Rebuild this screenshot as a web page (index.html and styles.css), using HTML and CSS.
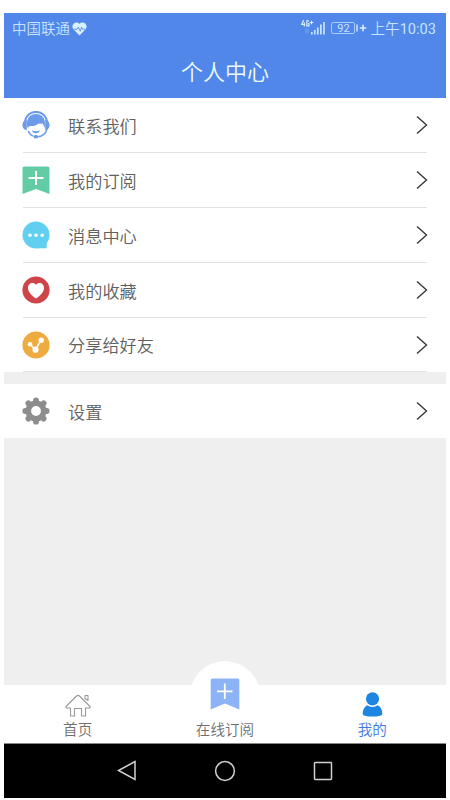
FILE: index.html
```
<!DOCTYPE html>
<html lang="zh-CN">
<head>
<meta charset="utf-8">
<title>个人中心</title>
<link rel="stylesheet" href="styles.css">
</head>
<body>
<div class="phone">
  <header class="header">
    <div class="status">
      <span class="carrier">中国联通</span>
      <svg class="health" width="15" height="14" viewBox="0 0 15 14"><path d="M7.500 13.500 1.400 7.300C-2 3 4-2 7.500 2.100 11-2 17 3 13.600 7.300Z" fill="#d9f0ff"/><path d="M2 7.200h3l1.300-2 2 4 1.300-4 1 2H13" fill="none" stroke="#5388ea" stroke-width=".9"/></svg>
      <svg class="signal" width="25" height="16" viewBox="0 0 25 16"><g fill="none" stroke="#d9f0ff" stroke-width="1.200"><path d="M2.700 0 .8 4.500h3.400M3.300 2.500v4M8 .8H5.800v5H8V3.500H7M8.800 2.500h3.400M10.500.8v3.400"/></g><path d="M5 8.500v5M7 8.500v5" stroke="#82aef5" stroke-width=".8"/><path d="M10.800 12v2.500M13.800 10v4.500M16.800 7.500v7M19.900 4.500v10M23 2v12.500" stroke="#c8e3ff" stroke-width="1.700"/></svg>
      <span class="battery">92</span>
      <svg class="charge" width="11" height="12" viewBox="0 0 11 12"><path d="M1 2.500v7" stroke="#c8e3ff" stroke-width="1.500"/><path d="M3.800 6h6.500M7 2.800v6.400" stroke="#d9f0ff" stroke-width="1.600"/></svg>
      <span class="time">上午<span class="digits">10:03</span></span>
    </div>
    <h1 class="title">个人中心</h1>
  </header>
  <main class="content">
    <ul class="list">
      <li class="row">
        <svg class="icon" viewBox="0 0 28 28"><path d="M3 10.500C5-2.300 23-2.300 25 10.500" fill="none" stroke="#6c9ce9" stroke-width="2"/><path d="M4.800 9v10C-1 19-1 9 4.800 9ZM23.200 9v10c5.800 0 5.800-10 0-10Z" fill="#6c9ce9"/><path d="M5.600 17.500C3.300 8 7.500 3 14 3s10.700 5 8.400 14.500c-.4-2.300-1-3.800-2-5.300-1 .8-2.400.8-3.900.3-2.500 2.500-5.500 2.800-8.500 2.500-1.100.5-2 1.200-2.400 2.500Z" fill="#6c9ce9"/><path d="M6.300 20c1 2.500 2.500 4.300 4.700 5M25 18c-1.200 4.800-4.500 7.500-10 7.800" fill="none" stroke="#6c9ce9" stroke-width="1.500"/><path d="M9.800 19.300c2.500 1.300 5.700 1.300 8.200 0-1 4-7.200 4-8.200 0Z" fill="#6c9ce9"/><rect x="11.500" y="23.900" width="4.500" height="3.600" rx="1.700" fill="#6c9ce9"/></svg>
        <span class="label">联系我们</span>
        <svg class="arrow" viewBox="0 0 12 20"><path d="m1 1.500 9.500 8.500L1 18.500"/></svg>
      </li>
      <li class="row">
        <svg class="icon" viewBox="0 0 28 28"><path d="M2 .5h24q1.500 0 1.500 1.500v26L14 23 .5 28V2Q.5.5 2 .5Z" fill="#62cda5"/><path d="M6.500 12h15M14 5v14" stroke="#fff" stroke-width="2"/></svg>
        <span class="label">我的订阅</span>
        <svg class="arrow" viewBox="0 0 12 20"><path d="m1 1.500 9.500 8.500L1 18.500"/></svg>
      </li>
      <li class="row">
        <svg class="icon" viewBox="0 0 28 28"><circle cx="14" cy="14" r="13.500" fill="#60cff0"/><path d="M16 27.200h8.700V22L22 19Z" fill="#60cff0"/><g fill="#fff"><circle cx="8" cy="14.200" r="1.800"/><circle cx="14" cy="14.200" r="1.800"/><circle cx="20.200" cy="14.200" r="1.800"/></g></svg>
        <span class="label">消息中心</span>
        <svg class="arrow" viewBox="0 0 12 20"><path d="m1 1.500 9.500 8.500L1 18.500"/></svg>
      </li>
      <li class="row">
        <svg class="icon" viewBox="0 0 28 28"><circle cx="14" cy="14" r="13.600" fill="#ce4549"/><path d="M14 22.500C11 20.500 6 16.500 6 12c0-5 5.500-6.500 8-3.200C16.500 5.500 22 7 22 12c0 4.500-5 8.500-8 10.500Z" fill="#fff"/></svg>
        <span class="label">我的收藏</span>
        <svg class="arrow" viewBox="0 0 12 20"><path d="m1 1.500 9.500 8.500L1 18.500"/></svg>
      </li>
      <li class="row">
        <svg class="icon" viewBox="0 0 28 28"><circle cx="14" cy="14" r="13.600" fill="#edab40"/><path d="m8 13.200 5.500 5.300L19 9.500" fill="none" stroke="#fff" stroke-width="1.500"/><g fill="#fff"><circle cx="8" cy="13.200" r="2.300"/><circle cx="13.500" cy="18.700" r="3.100"/><circle cx="19.200" cy="9.200" r="2.700"/></g></svg>
        <span class="label">分享给好友</span>
        <svg class="arrow" viewBox="0 0 12 20"><path d="m1 1.500 9.500 8.500L1 18.500"/></svg>
      </li>
    </ul>
    <ul class="list settings">
      <li class="row">
        <svg class="icon" viewBox="0 0 28 28"><path d="M14 3.300v21.400M3.300 14h21.400M6.400 6.400l15.200 15.200M21.600 6.400 6.400 21.600" fill="none" stroke="#8d8d8d" stroke-width="5.800" stroke-linecap="round"/><circle cx="14" cy="14" r="10.600" fill="#8d8d8d"/><circle cx="14" cy="14" r="4.900" fill="#fff"/></svg>
        <span class="label">设置</span>
        <svg class="arrow" viewBox="0 0 12 20"><path d="m1 1.500 9.500 8.500L1 18.500"/></svg>
      </li>
    </ul>
  </main>
  <nav class="tabs">
    <div class="tab">
      <svg class="home" width="26" height="23" viewBox="0 0 26 23"><path d="M1 12.500 11.500 2q1.500-1.200 3 0L25 12.500q.4 1.500-1 1.500h-3.500v8h-4v-7.500h-7V22h-4v-8H2q-1.400 0-1-1.500ZM20 1.500h3v5l-3-2Z" fill="none" stroke="#999" stroke-width="1.100" stroke-linejoin="round"/></svg>
      <span>首页</span>
    </div>
    <div class="tab middle">
      <svg class="mark" width="30" height="32" viewBox="0 0 30 32"><path d="M2 .5h26q1.300 0 1.300 1.500v29.500L15 25.500.7 31.500V2Q.7.500 2 .5Z" fill="#8db3f7"/><path d="M7 13.300h15.500M14.800 5.500v15.500" stroke="#fff" stroke-width="1.800"/></svg>
      <span>在线订阅</span>
    </div>
    <div class="tab active">
      <svg class="user" width="21" height="25" viewBox="0 0 21 25"><circle cx="10.500" cy="6.800" r="6.600" fill="#1c86e2"/><path d="M5.200 13.300q5.300 3.500 10.600 0C19 15 20.500 18.500 20.300 22q0 1-1.200 1.400Q10.500 25.800 2 23.400.7 23 .7 22C.5 18.500 2 15 5.200 13.300Z" fill="#1c86e2"/></svg>
      <span>我的</span>
    </div>
  </nav>
  <footer class="system">
    <svg width="22" height="22" viewBox="0 0 22 22"><path d="M19 1.500v18L2.500 10.500Z"/></svg>
    <svg width="22" height="22" viewBox="0 0 22 22"><circle cx="11" cy="11" r="9.400"/></svg>
    <svg width="22" height="22" viewBox="0 0 22 22"><rect x="2.500" y="2.500" width="17" height="17" rx=".7"/></svg>
  </footer>
</div>
</body>
</html>
```

FILE: styles.css
```
* { box-sizing: border-box; }

body {
  margin: 0;
  padding: 13px 4px 2px;
  background: #fff;
  font-family: Roboto, "Noto Sans CJK SC", sans-serif;
  font-weight: 350;
}

svg { display: block; flex-shrink: 0; }

.phone {
  display: flex;
  flex-direction: column;
  width: 442px;
  height: 785px;
  background: #efefef;
}

.header {
  height: 85px;
  background: #5087e9;
  color: #f0fbff;
}

.status {
  display: flex;
  align-items: center;
  height: 31px;
  padding: 0 10px 0 8px;
  font-size: 14.5px;
  line-height: 20px;
  color: #c8e3ff;
  white-space: nowrap;
}

.carrier { padding-top: 2px; }
.health { margin-left: 2px; }
.signal { margin: 0 0 2px auto; }

.battery {
  width: 24px;
  height: 12px;
  margin: 0 0 1px 5px;
  border: 1px solid #a9cbfc;
  border-radius: 2px;
  font-size: 11px;
  font-weight: 400;
  line-height: 11px;
  text-align: center;
}

.charge { margin: 0 0 2px 1px; }
.time { margin-left: 3px; padding-top: 1px; font-size: 14.6px; }
.digits { font-weight: 400; }

.title {
  margin: 13px 0 0;
  font-size: 22px;
  font-weight: 350;
  line-height: 32px;
  text-align: center;
}

.content { flex: 1; }

.list {
  margin: 0;
  padding: 0 19px;
  background: #fff;
  list-style: none;
}

.row {
  display: flex;
  align-items: center;
  height: 55px;
  border-bottom: 1px solid #e2e2e2;
}

.row:last-child { height: 54px; }
.settings { margin-top: 12px; }
.settings .row { border-bottom: 0; }

.icon {
  width: 28px;
  height: 28px;
  margin-left: -1px;
}

.label {
  flex: 1;
  margin-left: 18px;
  padding-top: 3px;
  font-size: 17.2px;
  line-height: 26px;
  color: #606060;
}

.arrow {
  width: 12px;
  height: 20px;
  margin-right: -1px;
  fill: none;
  stroke: #383838;
  stroke-width: 1.4;
}

.tabs {
  display: flex;
  height: 58px;
  background: #fff;
}

.tab {
  position: relative;
  display: flex;
  flex: 1;
  flex-direction: column;
  align-items: center;
  justify-content: flex-end;
  padding-bottom: 2px;
  font-size: 14.6px;
  line-height: 22px;
  color: #707070;
}

.tab span, .tab svg { position: relative; }
.home { margin-bottom: 2px; }
.mark { margin-bottom: 9px; }
.user { margin-bottom: 2px; }

.middle::before {
  content: "";
  position: absolute;
  top: -24px;
  left: 50%;
  width: 70px;
  height: 70px;
  margin-left: -35px;
  border-radius: 50%;
  background: #fff;
}

.active { color: #4279e0; }

.system {
  display: flex;
  align-items: center;
  justify-content: center;
  gap: 76px;
  height: 55px;
  border-top: 1px solid #888;
  background: #000;
  fill: none;
  stroke: #d0d0d0;
  stroke-width: 1.5;
}
```
